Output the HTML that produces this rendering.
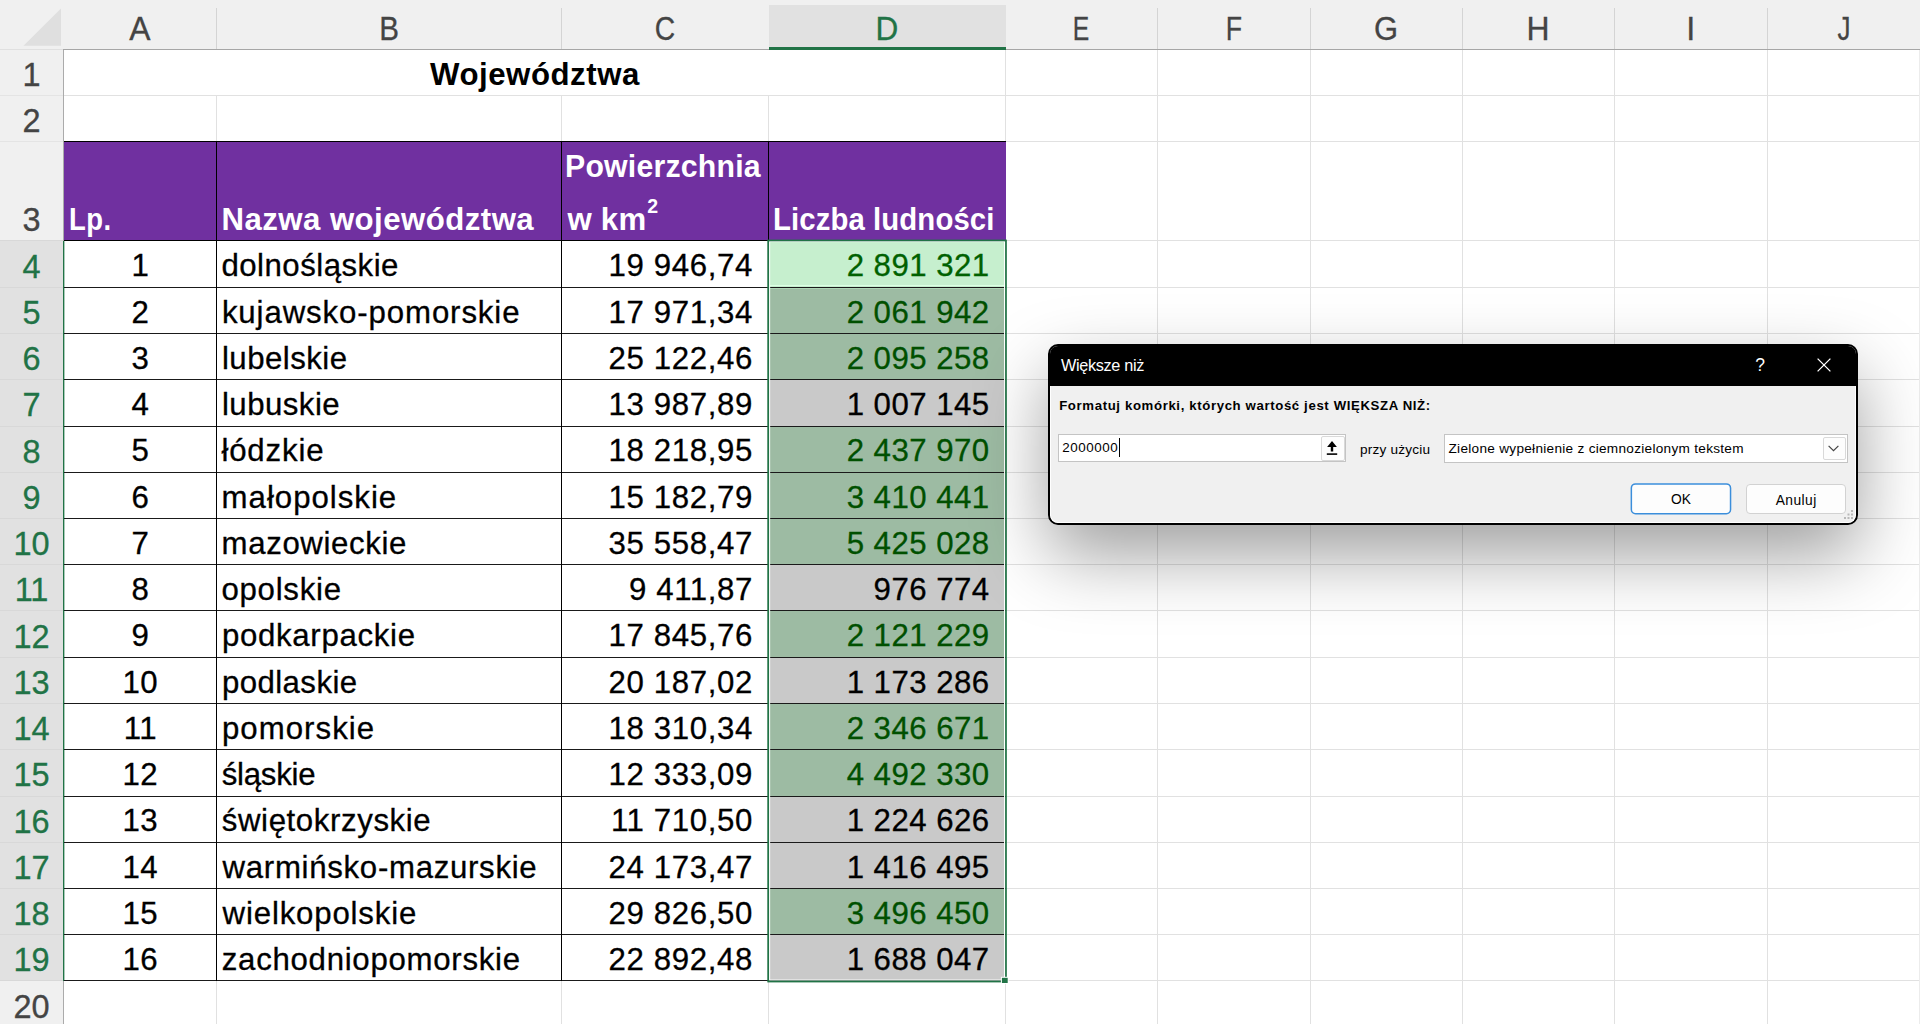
<!DOCTYPE html>
<html lang="pl"><head><meta charset="utf-8"><title>Większe niż</title>
<style>
html,body{margin:0;padding:0;background:#fff}
body{width:1920px;height:1024px;position:relative;overflow:hidden;font-family:"Liberation Sans", sans-serif}
.r{position:absolute}
.t{position:absolute;white-space:nowrap;line-height:1}
#dlg{position:absolute;left:1048px;top:344px;width:806px;height:177px;border:2px solid #000;border-radius:10px;background:#f0f0f0;overflow:hidden;box-shadow:0 30px 72px rgba(0,0,0,.38)}
#dlg .tb{position:absolute;left:0;top:0;width:100%;height:40px;background:#000}
#dlg .d{position:absolute;white-space:nowrap;line-height:1;color:#000}
.btn{position:absolute;box-sizing:border-box;border-radius:4px;background:#fdfdfd;text-align:center}

</style></head><body>
<div class="r" style="left:216px;top:96px;width:1px;height:45px;background:#e1e1e1;"></div>
<div class="r" style="left:216px;top:981px;width:1px;height:50px;background:#e1e1e1;"></div>
<div class="r" style="left:561px;top:96px;width:1px;height:45px;background:#e1e1e1;"></div>
<div class="r" style="left:561px;top:981px;width:1px;height:50px;background:#e1e1e1;"></div>
<div class="r" style="left:768px;top:96px;width:1px;height:45px;background:#e1e1e1;"></div>
<div class="r" style="left:768px;top:981px;width:1px;height:50px;background:#e1e1e1;"></div>
<div class="r" style="left:1005px;top:50px;width:1px;height:91px;background:#e1e1e1;"></div>
<div class="r" style="left:1005px;top:982px;width:1px;height:50px;background:#e1e1e1;"></div>
<div class="r" style="left:1157px;top:50px;width:1px;height:980px;background:#e1e1e1;"></div>
<div class="r" style="left:1310px;top:50px;width:1px;height:980px;background:#e1e1e1;"></div>
<div class="r" style="left:1462px;top:50px;width:1px;height:980px;background:#e1e1e1;"></div>
<div class="r" style="left:1614px;top:50px;width:1px;height:980px;background:#e1e1e1;"></div>
<div class="r" style="left:1767px;top:50px;width:1px;height:980px;background:#e1e1e1;"></div>
<div class="r" style="left:64px;top:95px;width:1856px;height:1px;background:#e1e1e1;"></div>
<div class="r" style="left:1006px;top:141px;width:914px;height:1px;background:#e1e1e1;"></div>
<div class="r" style="left:1006px;top:240px;width:914px;height:1px;background:#e1e1e1;"></div>
<div class="r" style="left:1006px;top:287px;width:914px;height:1px;background:#e1e1e1;"></div>
<div class="r" style="left:1006px;top:333px;width:914px;height:1px;background:#e1e1e1;"></div>
<div class="r" style="left:1006px;top:379px;width:914px;height:1px;background:#e1e1e1;"></div>
<div class="r" style="left:1006px;top:426px;width:914px;height:1px;background:#e1e1e1;"></div>
<div class="r" style="left:1006px;top:472px;width:914px;height:1px;background:#e1e1e1;"></div>
<div class="r" style="left:1006px;top:518px;width:914px;height:1px;background:#e1e1e1;"></div>
<div class="r" style="left:1006px;top:564px;width:914px;height:1px;background:#e1e1e1;"></div>
<div class="r" style="left:1006px;top:610px;width:914px;height:1px;background:#e1e1e1;"></div>
<div class="r" style="left:1006px;top:657px;width:914px;height:1px;background:#e1e1e1;"></div>
<div class="r" style="left:1006px;top:703px;width:914px;height:1px;background:#e1e1e1;"></div>
<div class="r" style="left:1006px;top:749px;width:914px;height:1px;background:#e1e1e1;"></div>
<div class="r" style="left:1006px;top:796px;width:914px;height:1px;background:#e1e1e1;"></div>
<div class="r" style="left:1006px;top:842px;width:914px;height:1px;background:#e1e1e1;"></div>
<div class="r" style="left:1006px;top:888px;width:914px;height:1px;background:#e1e1e1;"></div>
<div class="r" style="left:1006px;top:934px;width:914px;height:1px;background:#e1e1e1;"></div>
<div class="r" style="left:1006px;top:980px;width:914px;height:1px;background:#e1e1e1;"></div>
<div class="r" style="left:1919px;top:50px;width:1px;height:980px;background:#ececec;"></div>
<div class="r" style="left:0px;top:0px;width:1920px;height:49px;background:#f0f0f0;"></div>
<div class="r" style="left:0px;top:49px;width:64px;height:1px;background:#e0e0e0;"></div>
<div class="r" style="left:63px;top:49px;width:1857px;height:1px;background:#a6a6a6;"></div>
<div class="r" style="left:769px;top:5px;width:237px;height:43px;background:#e1e1e1;"></div>
<div class="r" style="left:769px;top:47px;width:237px;height:3px;background:#217346;"></div>
<div class="r" style="left:216px;top:8px;width:1px;height:41px;background:#d4d4d4;"></div>
<div class="r" style="left:561px;top:8px;width:1px;height:41px;background:#d4d4d4;"></div>
<div class="r" style="left:1157px;top:8px;width:1px;height:41px;background:#d4d4d4;"></div>
<div class="r" style="left:1310px;top:8px;width:1px;height:41px;background:#d4d4d4;"></div>
<div class="r" style="left:1462px;top:8px;width:1px;height:41px;background:#d4d4d4;"></div>
<div class="r" style="left:1614px;top:8px;width:1px;height:41px;background:#d4d4d4;"></div>
<div class="r" style="left:1767px;top:8px;width:1px;height:41px;background:#d4d4d4;"></div>
<div class="t" style="top:13.49px;font-size:32.5px;color:#444;letter-spacing:0px;-webkit-text-stroke:0.3px;left:-159.80px;width:600px;text-align:center;transform:scaleX(0.98);transform-origin:center center;">A</div>
<div class="t" style="top:13.49px;font-size:32.5px;color:#444;letter-spacing:0px;-webkit-text-stroke:0.3px;left:88.70px;width:600px;text-align:center;transform:scaleX(0.91);transform-origin:center center;">B</div>
<div class="t" style="top:13.49px;font-size:32.5px;color:#444;letter-spacing:0px;-webkit-text-stroke:0.3px;left:364.70px;width:600px;text-align:center;transform:scaleX(0.87);transform-origin:center center;">C</div>
<div class="t" style="top:13.49px;font-size:32.5px;color:#217346;letter-spacing:0px;-webkit-text-stroke:0.3px;left:586.70px;width:600px;text-align:center;transform:scaleX(0.97);transform-origin:center center;">D</div>
<div class="t" style="top:13.49px;font-size:32.5px;color:#444;letter-spacing:0px;-webkit-text-stroke:0.3px;left:781.20px;width:600px;text-align:center;transform:scaleX(0.76);transform-origin:center center;">E</div>
<div class="t" style="top:13.49px;font-size:32.5px;color:#444;letter-spacing:0px;-webkit-text-stroke:0.3px;left:933.70px;width:600px;text-align:center;transform:scaleX(0.82);transform-origin:center center;">F</div>
<div class="t" style="top:13.49px;font-size:32.5px;color:#444;letter-spacing:0px;-webkit-text-stroke:0.3px;left:1086.20px;width:600px;text-align:center;transform:scaleX(0.95);transform-origin:center center;">G</div>
<div class="t" style="top:13.49px;font-size:32.5px;color:#444;letter-spacing:0px;-webkit-text-stroke:0.3px;left:1238.20px;width:600px;text-align:center;transform:scaleX(0.98);transform-origin:center center;">H</div>
<div class="t" style="top:13.49px;font-size:32.5px;color:#444;letter-spacing:0px;-webkit-text-stroke:0.3px;left:1390.70px;width:600px;text-align:center;transform:scaleX(1);transform-origin:center center;">I</div>
<div class="t" style="top:13.49px;font-size:32.5px;color:#444;letter-spacing:0px;-webkit-text-stroke:0.3px;left:1543.70px;width:600px;text-align:center;transform:scaleX(0.8);transform-origin:center center;">J</div>
<svg class="r" style="left:0;top:0" width="64" height="49"><polygon points="23.5,45.8 61,45.8 61,8.6" fill="#dfdfdf"/></svg>
<div class="r" style="left:0px;top:50px;width:63px;height:974px;background:#f0f0f0;"></div>
<div class="r" style="left:0px;top:241px;width:63px;height:740px;background:#e1e1e1;"></div>
<div class="r" style="left:63px;top:50px;width:1px;height:974px;background:#ababab;"></div>
<div class="r" style="left:63px;top:241px;width:1px;height:740px;background:#217346;"></div>
<div class="r" style="left:64px;top:241px;width:1px;height:740px;background:rgba(33,115,70,.38);"></div>
<div class="r" style="left:0px;top:95px;width:63px;height:1px;background:#e4e4e4;"></div>
<div class="r" style="left:0px;top:141px;width:63px;height:1px;background:#e4e4e4;"></div>
<div class="r" style="left:0px;top:240px;width:63px;height:1px;background:#d8d8d8;"></div>
<div class="r" style="left:0px;top:287px;width:63px;height:1px;background:#d8d8d8;"></div>
<div class="r" style="left:0px;top:333px;width:63px;height:1px;background:#d8d8d8;"></div>
<div class="r" style="left:0px;top:379px;width:63px;height:1px;background:#d8d8d8;"></div>
<div class="r" style="left:0px;top:426px;width:63px;height:1px;background:#d8d8d8;"></div>
<div class="r" style="left:0px;top:472px;width:63px;height:1px;background:#d8d8d8;"></div>
<div class="r" style="left:0px;top:518px;width:63px;height:1px;background:#d8d8d8;"></div>
<div class="r" style="left:0px;top:564px;width:63px;height:1px;background:#d8d8d8;"></div>
<div class="r" style="left:0px;top:610px;width:63px;height:1px;background:#d8d8d8;"></div>
<div class="r" style="left:0px;top:657px;width:63px;height:1px;background:#d8d8d8;"></div>
<div class="r" style="left:0px;top:703px;width:63px;height:1px;background:#d8d8d8;"></div>
<div class="r" style="left:0px;top:749px;width:63px;height:1px;background:#d8d8d8;"></div>
<div class="r" style="left:0px;top:796px;width:63px;height:1px;background:#d8d8d8;"></div>
<div class="r" style="left:0px;top:842px;width:63px;height:1px;background:#d8d8d8;"></div>
<div class="r" style="left:0px;top:888px;width:63px;height:1px;background:#d8d8d8;"></div>
<div class="r" style="left:0px;top:934px;width:63px;height:1px;background:#d8d8d8;"></div>
<div class="r" style="left:0px;top:980px;width:63px;height:1px;background:#d8d8d8;"></div>
<div class="t" style="top:58.89px;font-size:32.5px;color:#444;letter-spacing:0px;-webkit-text-stroke:0.3px;left:-268.50px;width:600px;text-align:center;">1</div>
<div class="t" style="top:104.89px;font-size:32.5px;color:#444;letter-spacing:0px;-webkit-text-stroke:0.3px;left:-268.50px;width:600px;text-align:center;">2</div>
<div class="t" style="top:204.49px;font-size:32.5px;color:#444;letter-spacing:0px;-webkit-text-stroke:0.3px;left:-268.50px;width:600px;text-align:center;">3</div>
<div class="t" style="top:250.74px;font-size:32.5px;color:#217346;letter-spacing:0px;-webkit-text-stroke:0.3px;left:-268.50px;width:600px;text-align:center;">4</div>
<div class="t" style="top:296.99px;font-size:32.5px;color:#217346;letter-spacing:0px;-webkit-text-stroke:0.3px;left:-268.50px;width:600px;text-align:center;">5</div>
<div class="t" style="top:343.24px;font-size:32.5px;color:#217346;letter-spacing:0px;-webkit-text-stroke:0.3px;left:-268.50px;width:600px;text-align:center;">6</div>
<div class="t" style="top:389.49px;font-size:32.5px;color:#217346;letter-spacing:0px;-webkit-text-stroke:0.3px;left:-268.50px;width:600px;text-align:center;">7</div>
<div class="t" style="top:435.74px;font-size:32.5px;color:#217346;letter-spacing:0px;-webkit-text-stroke:0.3px;left:-268.50px;width:600px;text-align:center;">8</div>
<div class="t" style="top:481.99px;font-size:32.5px;color:#217346;letter-spacing:0px;-webkit-text-stroke:0.3px;left:-268.50px;width:600px;text-align:center;">9</div>
<div class="t" style="top:528.24px;font-size:32.5px;color:#217346;letter-spacing:0px;-webkit-text-stroke:0.3px;left:-268.50px;width:600px;text-align:center;">10</div>
<div class="t" style="top:574.49px;font-size:32.5px;color:#217346;letter-spacing:0px;-webkit-text-stroke:0.3px;left:-268.50px;width:600px;text-align:center;">11</div>
<div class="t" style="top:620.74px;font-size:32.5px;color:#217346;letter-spacing:0px;-webkit-text-stroke:0.3px;left:-268.50px;width:600px;text-align:center;">12</div>
<div class="t" style="top:666.99px;font-size:32.5px;color:#217346;letter-spacing:0px;-webkit-text-stroke:0.3px;left:-268.50px;width:600px;text-align:center;">13</div>
<div class="t" style="top:713.24px;font-size:32.5px;color:#217346;letter-spacing:0px;-webkit-text-stroke:0.3px;left:-268.50px;width:600px;text-align:center;">14</div>
<div class="t" style="top:759.49px;font-size:32.5px;color:#217346;letter-spacing:0px;-webkit-text-stroke:0.3px;left:-268.50px;width:600px;text-align:center;">15</div>
<div class="t" style="top:805.74px;font-size:32.5px;color:#217346;letter-spacing:0px;-webkit-text-stroke:0.3px;left:-268.50px;width:600px;text-align:center;">16</div>
<div class="t" style="top:851.99px;font-size:32.5px;color:#217346;letter-spacing:0px;-webkit-text-stroke:0.3px;left:-268.50px;width:600px;text-align:center;">17</div>
<div class="t" style="top:898.24px;font-size:32.5px;color:#217346;letter-spacing:0px;-webkit-text-stroke:0.3px;left:-268.50px;width:600px;text-align:center;">18</div>
<div class="t" style="top:944.49px;font-size:32.5px;color:#217346;letter-spacing:0px;-webkit-text-stroke:0.3px;left:-268.50px;width:600px;text-align:center;">19</div>
<div class="t" style="top:990.74px;font-size:32.5px;color:#444;letter-spacing:0px;-webkit-text-stroke:0.3px;left:-268.50px;width:600px;text-align:center;">20</div>
<div class="t" style="top:58.89px;font-size:31.2px;color:#000;letter-spacing:0.537px;font-weight:bold;left:234.95px;width:600px;text-align:center;">Województwa</div>
<div class="r" style="left:64px;top:141px;width:942px;height:100px;background:#7030a0;"></div>
<div class="t" style="top:203.89px;font-size:31.2px;color:#fff;letter-spacing:0.563px;font-weight:bold;left:69.40px;transform:scaleX(0.88);transform-origin:left center;">Lp.</div>
<div class="t" style="top:203.89px;font-size:31.2px;color:#fff;letter-spacing:0.454px;font-weight:bold;left:221.45px;">Nazwa województwa</div>
<div class="t" style="top:151.09px;font-size:31.2px;color:#fff;letter-spacing:0.211px;font-weight:bold;left:565.30px;transform:scaleX(0.97);transform-origin:left center;">Powierzchnia</div>
<div class="t" style="top:203.59px;font-size:31.2px;color:#fff;letter-spacing:0.206px;font-weight:bold;left:567.50px;">w km<span style="font-size:19.5px;position:relative;top:-16.5px;letter-spacing:0;margin-left:1px">2</span></div>
<div class="t" style="top:203.89px;font-size:31.2px;color:#fff;letter-spacing:0.11px;font-weight:bold;left:773.20px;transform:scaleX(0.94);transform-origin:left center;">Liczba ludności</div>
<div class="r" style="left:769px;top:241px;width:236px;height:46px;background:#c6efce;"></div>
<div class="t" style="top:250.44px;font-size:31.2px;color:#000;letter-spacing:0.5px;-webkit-text-stroke:0.3px;left:-159.70px;width:600px;text-align:center;">1</div>
<div class="t" style="top:250.44px;font-size:31.2px;color:#000;letter-spacing:0.494px;-webkit-text-stroke:0.3px;left:221.40px;">dolnośląskie</div>
<div class="t" style="top:250.44px;font-size:31.2px;color:#000;letter-spacing:0.634px;-webkit-text-stroke:0.3px;right:1166.97px;">19&nbsp;946,74</div>
<div class="t" style="top:250.44px;font-size:31.2px;color:#006100;letter-spacing:0.478px;-webkit-text-stroke:0.3px;right:930.32px;">2&nbsp;891&nbsp;321</div>
<div class="r" style="left:769px;top:288px;width:236px;height:45px;background:#9dbba3;"></div>
<div class="t" style="top:296.69px;font-size:31.2px;color:#000;letter-spacing:0.5px;-webkit-text-stroke:0.3px;left:-159.70px;width:600px;text-align:center;">2</div>
<div class="t" style="top:296.69px;font-size:31.2px;color:#000;letter-spacing:0.889px;-webkit-text-stroke:0.3px;left:221.90px;">kujawsko-pomorskie</div>
<div class="t" style="top:296.69px;font-size:31.2px;color:#000;letter-spacing:0.634px;-webkit-text-stroke:0.3px;right:1166.97px;">17&nbsp;971,34</div>
<div class="t" style="top:296.69px;font-size:31.2px;color:#005000;letter-spacing:0.478px;-webkit-text-stroke:0.3px;right:930.32px;">2&nbsp;061&nbsp;942</div>
<div class="r" style="left:769px;top:334px;width:236px;height:45px;background:#9dbba3;"></div>
<div class="t" style="top:342.94px;font-size:31.2px;color:#000;letter-spacing:0.5px;-webkit-text-stroke:0.3px;left:-159.70px;width:600px;text-align:center;">3</div>
<div class="t" style="top:342.94px;font-size:31.2px;color:#000;letter-spacing:0.482px;-webkit-text-stroke:0.3px;left:221.90px;">lubelskie</div>
<div class="t" style="top:342.94px;font-size:31.2px;color:#000;letter-spacing:0.634px;-webkit-text-stroke:0.3px;right:1166.97px;">25&nbsp;122,46</div>
<div class="t" style="top:342.94px;font-size:31.2px;color:#005000;letter-spacing:0.478px;-webkit-text-stroke:0.3px;right:930.32px;">2&nbsp;095&nbsp;258</div>
<div class="r" style="left:769px;top:380px;width:236px;height:46px;background:#c9c9c9;"></div>
<div class="t" style="top:389.19px;font-size:31.2px;color:#000;letter-spacing:0.5px;-webkit-text-stroke:0.3px;left:-159.70px;width:600px;text-align:center;">4</div>
<div class="t" style="top:389.19px;font-size:31.2px;color:#000;letter-spacing:0.483px;-webkit-text-stroke:0.3px;left:221.90px;">lubuskie</div>
<div class="t" style="top:389.19px;font-size:31.2px;color:#000;letter-spacing:0.634px;-webkit-text-stroke:0.3px;right:1166.97px;">13&nbsp;987,89</div>
<div class="t" style="top:389.19px;font-size:31.2px;color:#000;letter-spacing:0.478px;-webkit-text-stroke:0.3px;right:930.32px;">1&nbsp;007&nbsp;145</div>
<div class="r" style="left:769px;top:427px;width:236px;height:45px;background:#9dbba3;"></div>
<div class="t" style="top:435.44px;font-size:31.2px;color:#000;letter-spacing:0.5px;-webkit-text-stroke:0.3px;left:-159.70px;width:600px;text-align:center;">5</div>
<div class="t" style="top:435.44px;font-size:31.2px;color:#000;letter-spacing:0.855px;-webkit-text-stroke:0.3px;left:221.40px;">łódzkie</div>
<div class="t" style="top:435.44px;font-size:31.2px;color:#000;letter-spacing:0.634px;-webkit-text-stroke:0.3px;right:1166.97px;">18&nbsp;218,95</div>
<div class="t" style="top:435.44px;font-size:31.2px;color:#005000;letter-spacing:0.478px;-webkit-text-stroke:0.3px;right:930.32px;">2&nbsp;437&nbsp;970</div>
<div class="r" style="left:769px;top:473px;width:236px;height:45px;background:#9dbba3;"></div>
<div class="t" style="top:481.69px;font-size:31.2px;color:#000;letter-spacing:0.5px;-webkit-text-stroke:0.3px;left:-159.70px;width:600px;text-align:center;">6</div>
<div class="t" style="top:481.69px;font-size:31.2px;color:#000;letter-spacing:0.987px;-webkit-text-stroke:0.3px;left:221.60px;">małopolskie</div>
<div class="t" style="top:481.69px;font-size:31.2px;color:#000;letter-spacing:0.634px;-webkit-text-stroke:0.3px;right:1166.97px;">15&nbsp;182,79</div>
<div class="t" style="top:481.69px;font-size:31.2px;color:#005000;letter-spacing:0.478px;-webkit-text-stroke:0.3px;right:930.32px;">3&nbsp;410&nbsp;441</div>
<div class="r" style="left:769px;top:519px;width:236px;height:45px;background:#9dbba3;"></div>
<div class="t" style="top:527.94px;font-size:31.2px;color:#000;letter-spacing:0.5px;-webkit-text-stroke:0.3px;left:-159.70px;width:600px;text-align:center;">7</div>
<div class="t" style="top:527.94px;font-size:31.2px;color:#000;letter-spacing:0.624px;-webkit-text-stroke:0.3px;left:221.60px;">mazowieckie</div>
<div class="t" style="top:527.94px;font-size:31.2px;color:#000;letter-spacing:0.634px;-webkit-text-stroke:0.3px;right:1166.97px;">35&nbsp;558,47</div>
<div class="t" style="top:527.94px;font-size:31.2px;color:#005000;letter-spacing:0.478px;-webkit-text-stroke:0.3px;right:930.32px;">5&nbsp;425&nbsp;028</div>
<div class="r" style="left:769px;top:565px;width:236px;height:45px;background:#c9c9c9;"></div>
<div class="t" style="top:574.19px;font-size:31.2px;color:#000;letter-spacing:0.5px;-webkit-text-stroke:0.3px;left:-159.70px;width:600px;text-align:center;">8</div>
<div class="t" style="top:574.19px;font-size:31.2px;color:#000;letter-spacing:0.741px;-webkit-text-stroke:0.3px;left:221.40px;">opolskie</div>
<div class="t" style="top:574.19px;font-size:31.2px;color:#000;letter-spacing:0.634px;-webkit-text-stroke:0.3px;right:1166.97px;">9&nbsp;411,87</div>
<div class="t" style="top:574.19px;font-size:31.2px;color:#000;letter-spacing:0.478px;-webkit-text-stroke:0.3px;right:930.32px;">976&nbsp;774</div>
<div class="r" style="left:769px;top:611px;width:236px;height:46px;background:#9dbba3;"></div>
<div class="t" style="top:620.44px;font-size:31.2px;color:#000;letter-spacing:0.5px;-webkit-text-stroke:0.3px;left:-159.70px;width:600px;text-align:center;">9</div>
<div class="t" style="top:620.44px;font-size:31.2px;color:#000;letter-spacing:0.689px;-webkit-text-stroke:0.3px;left:221.90px;">podkarpackie</div>
<div class="t" style="top:620.44px;font-size:31.2px;color:#000;letter-spacing:0.634px;-webkit-text-stroke:0.3px;right:1166.97px;">17&nbsp;845,76</div>
<div class="t" style="top:620.44px;font-size:31.2px;color:#005000;letter-spacing:0.478px;-webkit-text-stroke:0.3px;right:930.32px;">2&nbsp;121&nbsp;229</div>
<div class="r" style="left:769px;top:658px;width:236px;height:45px;background:#c9c9c9;"></div>
<div class="t" style="top:666.69px;font-size:31.2px;color:#000;letter-spacing:0.5px;-webkit-text-stroke:0.3px;left:-159.70px;width:600px;text-align:center;">10</div>
<div class="t" style="top:666.69px;font-size:31.2px;color:#000;letter-spacing:0.432px;-webkit-text-stroke:0.3px;left:221.90px;">podlaskie</div>
<div class="t" style="top:666.69px;font-size:31.2px;color:#000;letter-spacing:0.634px;-webkit-text-stroke:0.3px;right:1166.97px;">20&nbsp;187,02</div>
<div class="t" style="top:666.69px;font-size:31.2px;color:#000;letter-spacing:0.478px;-webkit-text-stroke:0.3px;right:930.32px;">1&nbsp;173&nbsp;286</div>
<div class="r" style="left:769px;top:704px;width:236px;height:45px;background:#9dbba3;"></div>
<div class="t" style="top:712.94px;font-size:31.2px;color:#000;letter-spacing:0.5px;-webkit-text-stroke:0.3px;left:-159.70px;width:600px;text-align:center;">11</div>
<div class="t" style="top:712.94px;font-size:31.2px;color:#000;letter-spacing:1.05px;-webkit-text-stroke:0.3px;left:221.90px;">pomorskie</div>
<div class="t" style="top:712.94px;font-size:31.2px;color:#000;letter-spacing:0.634px;-webkit-text-stroke:0.3px;right:1166.97px;">18&nbsp;310,34</div>
<div class="t" style="top:712.94px;font-size:31.2px;color:#005000;letter-spacing:0.478px;-webkit-text-stroke:0.3px;right:930.32px;">2&nbsp;346&nbsp;671</div>
<div class="r" style="left:769px;top:750px;width:236px;height:46px;background:#9dbba3;"></div>
<div class="t" style="top:759.19px;font-size:31.2px;color:#000;letter-spacing:0.5px;-webkit-text-stroke:0.3px;left:-159.70px;width:600px;text-align:center;">12</div>
<div class="t" style="top:759.19px;font-size:31.2px;color:#000;letter-spacing:-0.27px;-webkit-text-stroke:0.3px;left:221.80px;">śląskie</div>
<div class="t" style="top:759.19px;font-size:31.2px;color:#000;letter-spacing:0.634px;-webkit-text-stroke:0.3px;right:1166.97px;">12&nbsp;333,09</div>
<div class="t" style="top:759.19px;font-size:31.2px;color:#005000;letter-spacing:0.478px;-webkit-text-stroke:0.3px;right:930.32px;">4&nbsp;492&nbsp;330</div>
<div class="r" style="left:769px;top:797px;width:236px;height:45px;background:#c9c9c9;"></div>
<div class="t" style="top:805.44px;font-size:31.2px;color:#000;letter-spacing:0.5px;-webkit-text-stroke:0.3px;left:-159.70px;width:600px;text-align:center;">13</div>
<div class="t" style="top:805.44px;font-size:31.2px;color:#000;letter-spacing:0.603px;-webkit-text-stroke:0.3px;left:221.80px;">świętokrzyskie</div>
<div class="t" style="top:805.44px;font-size:31.2px;color:#000;letter-spacing:0.634px;-webkit-text-stroke:0.3px;right:1166.97px;">11&nbsp;710,50</div>
<div class="t" style="top:805.44px;font-size:31.2px;color:#000;letter-spacing:0.478px;-webkit-text-stroke:0.3px;right:930.32px;">1&nbsp;224&nbsp;626</div>
<div class="r" style="left:769px;top:843px;width:236px;height:45px;background:#c9c9c9;"></div>
<div class="t" style="top:851.69px;font-size:31.2px;color:#000;letter-spacing:0.5px;-webkit-text-stroke:0.3px;left:-159.70px;width:600px;text-align:center;">14</div>
<div class="t" style="top:851.69px;font-size:31.2px;color:#000;letter-spacing:0.695px;-webkit-text-stroke:0.3px;left:222.60px;">warmińsko-mazurskie</div>
<div class="t" style="top:851.69px;font-size:31.2px;color:#000;letter-spacing:0.634px;-webkit-text-stroke:0.3px;right:1166.97px;">24&nbsp;173,47</div>
<div class="t" style="top:851.69px;font-size:31.2px;color:#000;letter-spacing:0.478px;-webkit-text-stroke:0.3px;right:930.32px;">1&nbsp;416&nbsp;495</div>
<div class="r" style="left:769px;top:889px;width:236px;height:45px;background:#9dbba3;"></div>
<div class="t" style="top:897.94px;font-size:31.2px;color:#000;letter-spacing:0.5px;-webkit-text-stroke:0.3px;left:-159.70px;width:600px;text-align:center;">15</div>
<div class="t" style="top:897.94px;font-size:31.2px;color:#000;letter-spacing:0.831px;-webkit-text-stroke:0.3px;left:222.60px;">wielkopolskie</div>
<div class="t" style="top:897.94px;font-size:31.2px;color:#000;letter-spacing:0.634px;-webkit-text-stroke:0.3px;right:1166.97px;">29&nbsp;826,50</div>
<div class="t" style="top:897.94px;font-size:31.2px;color:#005000;letter-spacing:0.478px;-webkit-text-stroke:0.3px;right:930.32px;">3&nbsp;496&nbsp;450</div>
<div class="r" style="left:769px;top:935px;width:236px;height:45px;background:#c9c9c9;"></div>
<div class="t" style="top:944.19px;font-size:31.2px;color:#000;letter-spacing:0.5px;-webkit-text-stroke:0.3px;left:-159.70px;width:600px;text-align:center;">16</div>
<div class="t" style="top:944.19px;font-size:31.2px;color:#000;letter-spacing:0.716px;-webkit-text-stroke:0.3px;left:221.80px;">zachodniopomorskie</div>
<div class="t" style="top:944.19px;font-size:31.2px;color:#000;letter-spacing:0.634px;-webkit-text-stroke:0.3px;right:1166.97px;">22&nbsp;892,48</div>
<div class="t" style="top:944.19px;font-size:31.2px;color:#000;letter-spacing:0.478px;-webkit-text-stroke:0.3px;right:930.32px;">1&nbsp;688&nbsp;047</div>
<div class="r" style="left:770px;top:285px;width:234px;height:1px;background:#dcffe4;"></div>
<div class="r" style="left:770px;top:288px;width:234px;height:1px;background:#aed4b5;"></div>
<div class="r" style="left:64px;top:141px;width:942px;height:1px;background:#000;"></div>
<div class="r" style="left:64px;top:240px;width:942px;height:1px;background:#000;"></div>
<div class="r" style="left:64px;top:287px;width:942px;height:1px;background:#1a1a1a;"></div>
<div class="r" style="left:64px;top:333px;width:942px;height:1px;background:#1a1a1a;"></div>
<div class="r" style="left:64px;top:379px;width:942px;height:1px;background:#1a1a1a;"></div>
<div class="r" style="left:64px;top:426px;width:942px;height:1px;background:#1a1a1a;"></div>
<div class="r" style="left:64px;top:472px;width:942px;height:1px;background:#1a1a1a;"></div>
<div class="r" style="left:64px;top:518px;width:942px;height:1px;background:#1a1a1a;"></div>
<div class="r" style="left:64px;top:564px;width:942px;height:1px;background:#1a1a1a;"></div>
<div class="r" style="left:64px;top:610px;width:942px;height:1px;background:#1a1a1a;"></div>
<div class="r" style="left:64px;top:657px;width:942px;height:1px;background:#1a1a1a;"></div>
<div class="r" style="left:64px;top:703px;width:942px;height:1px;background:#1a1a1a;"></div>
<div class="r" style="left:64px;top:749px;width:942px;height:1px;background:#1a1a1a;"></div>
<div class="r" style="left:64px;top:796px;width:942px;height:1px;background:#1a1a1a;"></div>
<div class="r" style="left:64px;top:842px;width:942px;height:1px;background:#1a1a1a;"></div>
<div class="r" style="left:64px;top:888px;width:942px;height:1px;background:#1a1a1a;"></div>
<div class="r" style="left:64px;top:934px;width:942px;height:1px;background:#1a1a1a;"></div>
<div class="r" style="left:64px;top:980px;width:942px;height:1px;background:#1a1a1a;"></div>
<div class="r" style="left:216px;top:141px;width:1px;height:840px;background:#000;"></div>
<div class="r" style="left:561px;top:141px;width:1px;height:840px;background:#000;"></div>
<div class="r" style="left:768px;top:141px;width:1px;height:840px;background:#000;"></div>
<svg class="r" style="left:0;top:0" width="1920" height="1024"><rect x="769.60" y="241.55" width="234.95" height="738.55" fill="none" stroke="#fff" stroke-width="1.1"/><rect x="768.17" y="240.47" width="237.80" height="741.05" fill="none" stroke="#217346" stroke-width="1.75"/><rect x="1000.9" y="976.8" width="7.8" height="7.2" fill="#fff"/><rect x="1001.9" y="977.8" width="5.8" height="5.2" fill="#217346"/></svg>
<div id="dlg">
<div class="tb"></div>
<div class="r" style="left:0;top:40px;width:806px;height:137px;box-sizing:border-box;border:1px solid #fff;border-top:none;border-radius:0 0 8px 8px"></div>
<div class="d" style="left:11px;top:11px;font-size:16.3px;color:#fff;letter-spacing:-0.35px">Większe niż</div>
<div class="d" style="left:705.3px;top:10.5px;font-size:17.5px;color:#fff">?</div>
<svg class="r" style="left:765.4px;top:10.3px" width="18" height="18" viewBox="0 0 18 18"><path d="M2.6 2.6 L15.4 15.4 M15.4 2.6 L2.6 15.4" stroke="#fff" stroke-width="1.3" fill="none"/></svg>
<div class="d" style="left:9.2px;top:53.4px;font-size:13.2px;font-weight:bold;letter-spacing:0.63px">Formatuj komórki, których wartość jest WIĘKSZA NIŻ:</div>
<div class="r" style="left:8px;top:88px;width:288px;height:28px;box-sizing:border-box;border:1px solid #c4c4c4;background:#fff"></div>
<div class="d" style="left:12.2px;top:95.3px;font-size:13.4px;letter-spacing:0.55px">2000000</div>
<div class="r" style="left:69px;top:92px;width:1px;height:19px;background:#000"></div>
<div class="r" style="left:271px;top:90px;width:24px;height:25px;box-sizing:border-box;border:1px solid #d9d9d9;border-radius:2px;background:#fdfdfd"></div>
<svg class="r" style="left:273.5px;top:93px" width="16" height="18" viewBox="0 0 16 18"><path d="M8 2 L12.9 8 H9.2 V12.6 H6.8 V8 H3.1 Z" fill="#000"/><rect x="2.8" y="14.3" width="10.4" height="1.6" fill="#000"/></svg>
<div class="d" style="left:310px;top:96.5px;font-size:13.6px;letter-spacing:0.2px">przy użyciu</div>
<div class="r" style="left:394px;top:88px;width:404px;height:29px;box-sizing:border-box;border:1px solid #c4c4c4;background:#fff"></div>
<div class="d" style="left:398.5px;top:96px;font-size:13.6px;letter-spacing:0.29px">Zielone wypełnienie z ciemnozielonym tekstem</div>
<div class="r" style="left:773px;top:91px;width:23px;height:23px;box-sizing:border-box;border:1px solid #d9d9d9;border-radius:2px;background:#fdfdfd"></div>
<svg class="r" style="left:777px;top:98px" width="14" height="9" viewBox="0 0 14 9"><path d="M1.6 1.9 L6.5 6.6 L11.4 1.9" stroke="#444" stroke-width="1.2" fill="none"/></svg>
<svg class="r" style="left:580px;top:136px" width="104" height="35" viewBox="0 0 104 35"><rect x="1.35" y="1.9" width="99.2" height="29.8" rx="4.2" fill="#fdfdfd" stroke="#3b8edb" stroke-width="1.5"/></svg>
<div class="d" style="left:580.6px;top:146.9px;width:100.6px;text-align:center;font-size:13.8px">OK</div>
<div class="btn" style="left:696.3px;top:137.5px;width:99.8px;height:30.4px;border:1px solid #d2d2d2;line-height:1;padding-top:9.1px;font-size:13.8px;letter-spacing:0.45px">Anuluj</div>
<svg class="r" style="left:792px;top:162px" width="14" height="14" viewBox="0 0 14 14"><g fill="#b8b8b8"><rect x="9" y="2" width="2" height="2"/><rect x="5.5" y="5.5" width="2" height="2"/><rect x="9" y="5.5" width="2" height="2"/><rect x="2" y="9" width="2" height="2"/><rect x="5.5" y="9" width="2" height="2"/><rect x="9" y="9" width="2" height="2"/></g></svg>
</div>

</body></html>
